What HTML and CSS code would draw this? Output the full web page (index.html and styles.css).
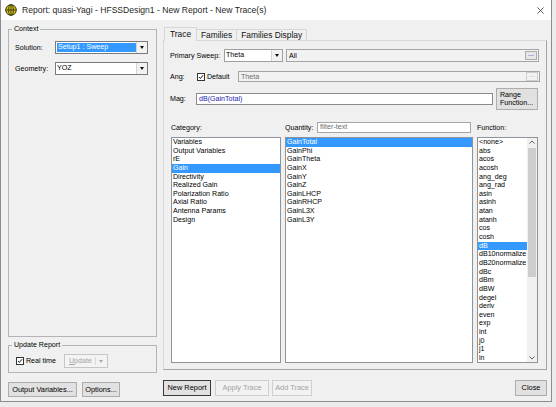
FILE: index.html
```html
<!DOCTYPE html>
<html lang="en">
<head>
    <meta charset="UTF-8">
    <title>Report: quasi-Yagi - HFSSDesign1 - New Report - New Trace(s)</title>
    <link rel="stylesheet" href="styles.css">
</head>
<body>
    <div class="window">
        <div class="titlebar">
            <svg class="app-icon" viewBox="0 0 12 12">
                <circle cx="6" cy="6" r="5.3" fill="#d2c019" stroke="#3b3a10" stroke-width="1"/>
                <ellipse cx="6" cy="6" rx="2.4" ry="5.3" fill="none" stroke="#3b3a10" stroke-width="0.9"/>
                <line x1="0.8" y1="6" x2="11.2" y2="6" stroke="#3b3a10" stroke-width="0.9"/>
                <line x1="6" y1="0.8" x2="6" y2="11.2" stroke="#3b3a10" stroke-width="0.9"/>
            </svg>
            <span class="title">Report: quasi-Yagi - HFSSDesign1 - New Report - New Trace(s)</span>
            <svg class="close-x" viewBox="0 0 8 8">
                <path d="M0.5 0.5 L7.5 7.5 M7.5 0.5 L0.5 7.5" stroke="#333" stroke-width="0.9"/>
            </svg>
        </div>

        <div class="client">
            <!-- left side: context + update -->
            <div class="side">
                <fieldset class="group context">
                    <legend>Context</legend>
                    <div class="group-body context-body">
                        <div class="field-row">
                            <span class="lbl">Solution:</span>
                            <div class="combo">
                                <span class="combo-text sel">Setup1 : Sweep</span>
                                <span class="combo-btn"></span>
                            </div>
                        </div>
                        <div class="field-row">
                            <span class="lbl">Geometry:</span>
                            <div class="combo">
                                <span class="combo-text">YOZ</span>
                                <span class="combo-btn"></span>
                            </div>
                        </div>
                    </div>
                </fieldset>

                <fieldset class="group update">
                    <legend>Update Report</legend>
                    <div class="group-body update-body">
                        <span class="check">
                            <svg viewBox="0 0 8 8"><path d="M1.3 4 L3.2 6 L6.8 1.6" fill="none" stroke="#111" stroke-width="1.3"/></svg>
                        </span>
                        <span class="check-lbl">Real time</span>
                        <span class="split-btn disabled"><span class="split-text"><u>U</u>pdate</span><span class="split-arrow"></span></span>
                    </div>
                </fieldset>

                <div class="btn-row">
                    <button class="btn w-outvars">Output Variables...</button>
                    <button class="btn w-options">Options...</button>
                </div>
            </div>

            <!-- right side: trace tabs -->
            <div class="main">
                <div class="tabs">
                    <div class="tab active">Trace</div>
                    <div class="tab">Families</div>
                    <div class="tab">Families Display</div>
                </div>

                <div class="panel">
                    <div class="row sweep-row">
                        <span class="lbl w-sweep">Primary Sweep:</span>
                        <div class="combo w-theta">
                            <span class="combo-text">Theta</span>
                            <span class="combo-btn"></span>
                        </div>
                        <div class="textbox readonly w-all">
                            <span class="tb-text">All</span>
                            <span class="dots">...</span>
                        </div>
                    </div>

                    <div class="row ang-row">
                        <span class="lbl w-ang">Ang:</span>
                        <span class="check">
                            <svg viewBox="0 0 8 8"><path d="M1.3 4 L3.2 6 L6.8 1.6" fill="none" stroke="#111" stroke-width="1.3"/></svg>
                        </span>
                        <span class="check-lbl">Default</span>
                        <div class="textbox readonly w-angbox">
                            <span class="tb-text muted">Theta</span>
                            <span class="dots off">...</span>
                        </div>
                    </div>

                    <div class="row mag-row">
                        <span class="lbl w-mag">Mag:</span>
                        <div class="textbox w-magbox">
                            <span class="tb-text expr">dB(GainTotal)</span>
                        </div>
                        <button class="btn range-btn">Range<br>Function...</button>
                    </div>

                    <div class="cols head-row">
                        <span class="col-lbl">Category:</span>
                        <div class="col-lbl quantity-head">
                            <span>Quantity:</span>
                            <div class="textbox filter"><span class="tb-text muted">filter-text</span></div>
                        </div>
                        <span class="col-lbl">Function:</span>
                    </div>

                    <div class="cols lists">
                        <div class="list">
                            <div class="item">Variables</div>
                            <div class="item">Output Variables</div>
                            <div class="item">rE</div>
                            <div class="item sel">Gain</div>
                            <div class="item">Directivity</div>
                            <div class="item">Realized Gain</div>
                            <div class="item">Polarization Ratio</div>
                            <div class="item">Axial Ratio</div>
                            <div class="item">Antenna Params</div>
                            <div class="item">Design</div>
                        </div>
                        <div class="list">
                            <div class="item sel">GainTotal</div>
                            <div class="item">GainPhi</div>
                            <div class="item">GainTheta</div>
                            <div class="item">GainX</div>
                            <div class="item">GainY</div>
                            <div class="item">GainZ</div>
                            <div class="item">GainLHCP</div>
                            <div class="item">GainRHCP</div>
                            <div class="item">GainL3X</div>
                            <div class="item">GainL3Y</div>
                        </div>
                        <div class="list func-list">
                            <div class="func-items">
                                <div class="item">&lt;none&gt;</div>
                                <div class="item">abs</div>
                                <div class="item">acos</div>
                                <div class="item">acosh</div>
                                <div class="item">ang_deg</div>
                                <div class="item">ang_rad</div>
                                <div class="item">asin</div>
                                <div class="item">asinh</div>
                                <div class="item">atan</div>
                                <div class="item">atanh</div>
                                <div class="item">cos</div>
                                <div class="item">cosh</div>
                                <div class="item sel">dB</div>
                                <div class="item">dB10normalize</div>
                                <div class="item">dB20normalize</div>
                                <div class="item">dBc</div>
                                <div class="item">dBm</div>
                                <div class="item">dBW</div>
                                <div class="item">degel</div>
                                <div class="item">deriv</div>
                                <div class="item">even</div>
                                <div class="item">exp</div>
                                <div class="item">int</div>
                                <div class="item">j0</div>
                                <div class="item">j1</div>
                                <div class="item">ln</div>
                            </div>
                            <div class="scrollbar">
                                <svg class="sb-arrow" viewBox="0 0 10 9"><path d="M2.5 5.5 L5 3 L7.5 5.5" fill="none" stroke="#606060" stroke-width="1"/></svg>
                                <div class="sb-track"><div class="sb-thumb"></div></div>
                                <svg class="sb-arrow" viewBox="0 0 10 9"><path d="M2.5 3.5 L5 6 L7.5 3.5" fill="none" stroke="#606060" stroke-width="1"/></svg>
                            </div>
                        </div>
                    </div>
                </div>

                <div class="btn-row">
                    <button class="btn default w-new">New Report</button>
                    <button class="btn disabled w-apply">Apply Trace</button>
                    <button class="btn disabled w-add">Add Trace</button>
                    <button class="btn w-close">Close</button>
                </div>
            </div>
        </div>
    </div>
</body>
</html>
```

FILE: styles.css
```css
* {
    margin: 0;
    padding: 0;
    box-sizing: border-box;
}

body {
    width: 556px;
    height: 407px;
    overflow: hidden;
    background: #ececec;
    font-family: 'Liberation Sans', Arial, sans-serif;
    font-size: 7.1px;
    color: #000;
}

.window {
    width: 552px;
    height: 402px;
    background: #f0f0f0;
    border: 1px solid #8c8c8c;
    border-top: none;
    display: flex;
    flex-direction: column;
}

/* title bar */
.titlebar {
    height: 20px;
    background: #fff;
    display: flex;
    align-items: center;
    padding-left: 4px;
}

.app-icon {
    width: 12px;
    height: 12px;
}

.title {
    margin-left: 5px;
    font-size: 8.6px;
    color: #1f1f1f;
}

.close-x {
    margin-left: auto;
    margin-right: 7px;
    width: 7px;
    height: 7px;
}

.client {
    flex: 1;
    display: flex;
    gap: 6px;
    padding-left: 7px;
}

/* left column */
.side {
    width: 149px;
    display: flex;
    flex-direction: column;
    padding: 5px 0 4px;
}

.group {
    border: 1px solid #b4b4b4;
    padding: 0;
    margin: 0;
    min-width: 0;
}

.group legend {
    margin-left: 3px;
    padding: 0 2px;
    line-height: 8px;
}

.context {
    flex: 1;
}

.context-body {
    padding: 8px 8px 0 6px;
    display: flex;
    flex-direction: column;
    gap: 8px;
}

.field-row {
    display: flex;
    align-items: center;
    height: 13px;
}

.lbl {
    flex: none;
    width: 40px;
}

.combo {
    flex: 1;
    display: flex;
    height: 13px;
    border: 1px solid #7a7a7a;
    background: #fff;
}

.combo-text {
    flex: 1;
    padding-left: 1px;
    line-height: 11px;
    white-space: nowrap;
    overflow: hidden;
}

.combo-text.sel {
    margin: 1px 0 1px 1px;
    line-height: 9px;
    background: #3399ff;
    color: #fff;
}

.combo-btn {
    flex: none;
    width: 11px;
    background: #f2f2f2;
    border-left: 1px solid #d4d4d4;
    display: flex;
    align-items: center;
    justify-content: center;
}

.combo-btn::after {
    content: '';
    border-left: 2.5px solid transparent;
    border-right: 2.5px solid transparent;
    border-top: 3px solid #111;
}

.update {
    margin-top: 4px;
    height: 32px;
}

.update-body {
    display: flex;
    align-items: center;
    padding: 5px 0 4px 7px;
}

.check {
    flex: none;
    width: 8px;
    height: 8px;
    border: 1px solid #333;
    background: #fff;
    display: flex;
}

.check svg {
    width: 100%;
    height: 100%;
}

.check-lbl {
    margin-left: 2px;
}

.split-btn {
    margin-left: 8px;
    width: 44px;
    height: 14px;
    border: 1px solid #c6c6c6;
    background: #f3f3f3;
    display: flex;
    align-items: center;
    color: #a3a3a3;
}

.split-text {
    padding-left: 4px;
    flex: 1;
}

.split-arrow {
    width: 12px;
    height: 8px;
    border-left: 1px solid #d8d8d8;
    display: flex;
    align-items: center;
    justify-content: center;
}

.split-arrow::after {
    content: '';
    border-left: 2.5px solid transparent;
    border-right: 2.5px solid transparent;
    border-top: 3px solid #a8a8a8;
}

.btn-row {
    display: flex;
    gap: 5px;
    height: 15px;
    margin-top: 9px;
}

.btn {
    font-family: inherit;
    font-size: 7.4px;
    color: #000;
    background: #e1e1e1;
    border: 1px solid #adadad;
    height: 100%;
    line-height: 1;
}

.btn.default {
    border-color: #3a3a3a;
}

.btn.disabled {
    background: #f2f2f2;
    border-color: #cfcfcf;
    color: #a3a3a3;
}

.w-outvars { width: 69px; }
.w-options { width: 38px; }

/* right column */
.main {
    width: 384px;
    display: flex;
    flex-direction: column;
    padding: 7px 0 5px;
}

.tabs {
    display: flex;
    align-items: flex-end;
    height: 13px;
    padding-left: 1px;
}

.tab {
    height: 11px;
    padding: 0 4px;
    border: 1px solid #d6d6d6;
    border-bottom: none;
    border-left: none;
    font-size: 8.4px;
    line-height: 10px;
    color: #111;
}

.tab.active {
    width: 33px;
    height: 14px;
    margin-bottom: -1px;
    border-left: 1px solid #d6d6d6;
    background: #f0f0f0;
    text-align: center;
    padding: 1px 0 0;
    position: relative;
}

.panel {
    height: 330px;
    border: 1px solid;
    border-color: #d9d9d9 #a3a3a3 #a3a3a3 #d9d9d9;
    padding: 8px 6px 6px;
    display: flex;
    flex-direction: column;
}

.row {
    display: flex;
    align-items: center;
}

.sweep-row {
    height: 13px;
}

.w-sweep { width: 54px; }

.w-theta {
    flex: none;
    width: 59px;
    border-color: #a0a0a0;
}

.textbox {
    height: 12px;
    border: 1px solid #a5a5a5;
    background: #fff;
    display: flex;
    align-items: center;
}

.textbox.readonly {
    background: #f2f2f2;
}

.tb-text {
    flex: 1;
    padding-left: 2px;
    white-space: nowrap;
}

.tb-text.muted {
    color: #6d6d6d;
}

.tb-text.expr {
    color: #2323b4;
}

.w-all {
    margin-left: 3px;
    width: 253px;
    height: 13px;
}

.dots {
    width: 12px;
    height: 9px;
    margin-right: 1px;
    background: #e6e6e6;
    border: 1px solid #adadad;
    color: #1a1ae0;
    font-size: 7px;
    line-height: 4px;
    text-align: center;
}

.dots.off {
    color: #a8a8a8;
    border-color: #cccccc;
    background: #f2f2f2;
}

.ang-row {
    margin-top: 9px;
    height: 11px;
}

.w-ang { width: 27px; }

.w-angbox {
    margin-left: auto;
    width: 302px;
    height: 11px;
}

.mag-row {
    margin-top: 6px;
    height: 22px;
}

.w-mag { width: 26px; }

.w-magbox {
    width: 297px;
    height: 12px;
    border-color: #8a8a8a;
}

.range-btn {
    margin-left: 3px;
    width: 42px;
    height: 22px;
    font-size: 7.1px;
    line-height: 8px;
    text-align: left;
    padding-left: 3px;
}

.cols {
    display: grid;
    grid-template-columns: 110px 188px 61px;
    gap: 4px;
    margin-left: 1px;
}

.head-row {
    margin-top: 11px;
    height: 12px;
}

.col-lbl {
    align-self: end;
    line-height: 9px;
}

.quantity-head {
    display: flex;
    align-items: flex-end;
    justify-content: space-between;
}

.filter {
    width: 154px;
    height: 11px;
    margin-right: 2px;
    align-self: flex-start;
}

.lists {
    margin-top: 4px;
    height: 226px;
}

.list {
    border: 1px solid #8f949c;
    background: #fff;
    overflow: hidden;
}

.item {
    height: 8.65px;
    line-height: 8.65px;
    padding-left: 1px;
    white-space: nowrap;
}

.item.sel {
    background: #3399ff;
    color: #fff;
}

.func-list {
    display: flex;
}

.func-items {
    flex: 1;
    overflow: hidden;
}

.scrollbar {
    flex: none;
    width: 10px;
    background: #f0f0f0;
    display: flex;
    flex-direction: column;
}

.sb-arrow {
    width: 10px;
    height: 9px;
    flex: none;
}

.sb-track {
    flex: 1;
    padding: 1px 1px 0;
}

.sb-thumb {
    height: 129px;
    background: #cdcdcd;
}

.main .btn-row {
    gap: 4px;
    height: 16px;
    margin-top: 10px;
}

.w-new { width: 48px; }
.w-apply { width: 54px; }
.w-add { width: 40px; margin-left: -1px; }

.w-close {
    width: 32px;
    margin-left: auto;
}
```
